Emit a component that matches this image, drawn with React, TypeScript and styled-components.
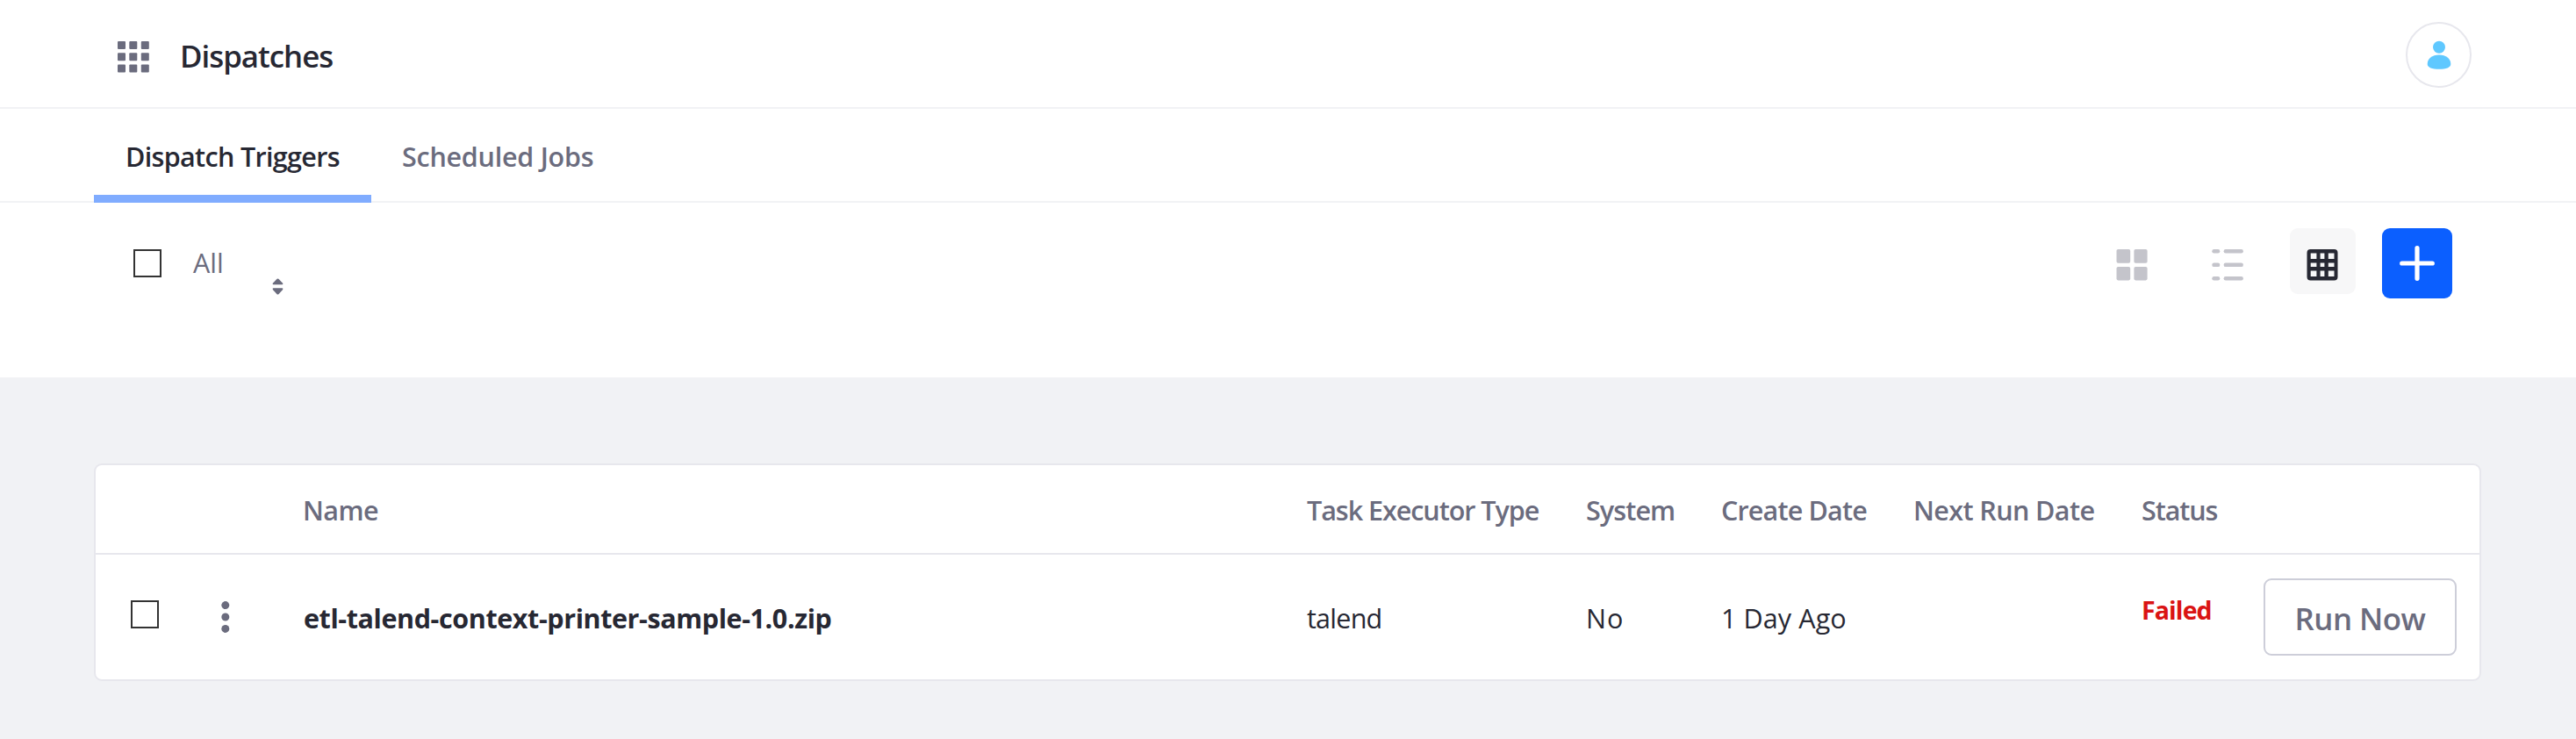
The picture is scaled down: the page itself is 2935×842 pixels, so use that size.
import React from 'react';
import styled, { createGlobalStyle } from 'styled-components';

const GlobalStyle = createGlobalStyle`
  *, *::before, *::after { box-sizing: border-box; }
  body {
    margin: 0;
    background: #f1f2f5;
    color: #272833;
    font-family: 'Open Sans', 'Noto Sans', sans-serif;
    font-size: 30.5px;
    line-height: 44px;
  }
  button, input { font: inherit; margin: 0; }
`;

const Page = styled.div`
  min-height: 842px;
  background: #f1f2f5;
`;

const Header = styled.header`
  display: flex;
  align-items: flex-start;
  height: 124px;
  padding: 25px 119px 0 134px;
  background: #fff;
  border-bottom: 2px solid #f1f2f5;
`;

const AppsIcon = styled.svg`
  width: 36px;
  height: 36px;
  margin-top: 22px;
  fill: #6b6c7e;
`;

const Title = styled.h1`
  flex: 1;
  margin: 14px 0 0 35px;
  font-size: 34.8px;
  font-weight: 600;
  line-height: 50px;
  letter-spacing: -1px;
`;

const Avatar = styled.button`
  display: flex;
  justify-content: center;
  width: 75px;
  height: 75px;
  padding: 0;
  background: #fff;
  border: 2px solid #e7e7ed;
  border-radius: 50%;

  svg {
    width: 28px;
    height: 33px;
    margin-top: 19px;
    fill: #5fc8ff;
  }
`;

const Tabs = styled.nav`
  display: flex;
  height: 107px;
  padding-left: 107px;
  background: #fff;
  border-bottom: 2px solid #f1f2f5;
`;

const Tab = styled.a<{ $active?: boolean; $spacing: number }>`
  height: 107px;
  padding: 32px 35px 0;
  color: ${p => (p.$active ? '#272833' : '#6b6c7e')};
  border-bottom: 9px solid ${p => (p.$active ? '#80acff' : 'transparent')};
  font-weight: 600;
  letter-spacing: ${p => p.$spacing}px;
  white-space: nowrap;
  ${p => p.$active && 'width: 316px; padding-left: 36px;'}
`;

const Toolbar = styled.div`
  display: flex;
  align-items: flex-start;
  height: 199px;
  padding: 29px 141px 0 152px;
  background: #fff;
`;

const Checkbox = styled.input.attrs({ type: 'checkbox' })`
  appearance: none;
  flex: none;
  width: 32px;
  height: 32px;
  background: #fff;
  border: 2px solid #333;
  border-radius: 0;
`;

const SelectAll = styled.label`
  display: flex;
  align-items: center;
  gap: 36px;
  width: 126px;
  height: 80px;
  color: #6b6c7e;

  span {
    padding-bottom: 3px;
  }
`;

const SortButton = styled.button`
  width: 36px;
  height: 36px;
  margin: 50px auto 0 20px;
  padding: 0;
  background: none;
  border: 0;

  svg {
    display: block;
    margin: 0 0 3px 12px;
    fill: #6b6c7e;
  }
`;

const ViewTypes = styled.div`
  display: flex;
  gap: 33.5px;
`;

const ViewButton = styled.button<{ $active?: boolean }>`
  display: flex;
  align-items: center;
  justify-content: center;
  width: 75px;
  height: 75px;
  padding: 0;
  color: ${p => (p.$active ? '#272833' : '#c4c4cb')};
  background: ${p => (p.$active ? '#f7f7f8' : 'transparent')};
  border: 0;
  border-radius: 9px;

  svg {
    width: 36px;
    height: 36px;
    margin: 9px 1px 0 0;
    fill: currentColor;
  }
`;

const AddButton = styled.button`
  display: flex;
  align-items: center;
  justify-content: center;
  width: 80px;
  height: 80px;
  margin-left: 30px;
  padding: 0;
  background: #0b5fff;
  border: 0;
  border-radius: 9px;
`;

const Card = styled.section`
  margin: 98px 108px 0 107px;
  background: #fff;
  border: 2px solid #e7e7ed;
  border-radius: 9px;
`;

const columns = '143px 93px 1144px 318px 154px 219px 260px 139px 220px';

const HeadRow = styled.div`
  display: grid;
  grid-template-columns: ${columns};
  align-items: center;
  height: 102px;
  color: #6b6c7e;
  border-bottom: 2px solid #e7e7ed;
  font-weight: 600;
`;

const Row = styled.div`
  display: grid;
  grid-template-columns: ${columns};
  align-items: center;
  height: 142px;

  ${Checkbox} {
    margin: 0 0 6px 40px;
  }
`;

const Cell = styled.div<{ $spacing?: number }>`
  padding-top: 2px;
  letter-spacing: ${p => p.$spacing ?? 0}px;
  white-space: nowrap;
`;

const NameCell = styled(Cell)`
  padding-left: 1px;
  font-weight: 700;
`;

const MenuButton = styled.button`
  width: 10px;
  height: 40px;
  padding: 0;
  background: none;
  border: 0;

  svg {
    display: block;
    fill: #6b6c7e;
  }
`;

const Status = styled.strong`
  padding-bottom: 17px;
  color: #da1414;
  font-size: 28.5px;
  font-weight: 700;
  letter-spacing: -0.9px;
`;

const RunButton = styled.button`
  height: 88px;
  padding: 3px 0 0;
  color: #6b6c7e;
  background: #fff;
  border: 2px solid #cdced9;
  border-radius: 9px;
  font-size: 34.8px;
  font-weight: 600;
  letter-spacing: -0.5px;
`;

const headings: { label: string; spacing: number }[] = [
  { label: 'Name', spacing: -0.6 },
  { label: 'Task Executor Type', spacing: -1.04 },
  { label: 'System', spacing: -0.9 },
  { label: 'Create Date', spacing: -0.82 },
  { label: 'Next Run Date', spacing: -0.59 },
  { label: 'Status', spacing: -1.1 },
];

export default function App() {
  return (
    <Page>
      <GlobalStyle />
      <Header>
        <AppsIcon viewBox="0 0 36 36">
          {[0, 13.2, 26.5].map(y =>
            [0, 13.3, 26.8].map(x => (
              <rect key={`${x}-${y}`} x={x} y={y} width="9" height="9" rx="1" />
            )),
          )}
        </AppsIcon>
        <Title>Dispatches</Title>
        <Avatar aria-label="User menu">
          <svg viewBox="0 0 28 33">
            <circle cx="14" cy="7.8" r="7" />
            <path d="M14 16.6C22 16.6 27.3 21.3 27.3 27C27.3 31 22 32.8 14 32.8C6 32.8 0.7 31 0.7 27C0.7 21.3 6 16.6 14 16.6Z" />
          </svg>
        </Avatar>
      </Header>

      <Tabs>
        <Tab $active $spacing={-0.66}>Dispatch Triggers</Tab>
        <Tab $spacing={-0.25}>Scheduled Jobs</Tab>
      </Tabs>

      <Toolbar>
        <SelectAll>
          <Checkbox />
          <span>All</span>
        </SelectAll>
        <SortButton aria-label="Sort">
          <svg width="13" height="20" viewBox="0 0 13 20">
            <path d="M6.5 0.4Q7 0.4 7.4 0.8L12.2 5.8Q12.8 7 11.6 7.3H1.4Q0.2 7 0.8 5.8L5.6 0.8Q6 0.4 6.5 0.4Z" />
            <path d="M6.5 18.6Q7 18.6 7.4 18.2L12.2 13Q12.8 11.5 11.6 11.2H1.4Q0.2 11.5 0.8 13L5.6 18.2Q6 18.6 6.5 18.6Z" />
          </svg>
        </SortButton>
        <ViewTypes>
          <ViewButton aria-label="Cards">
            <svg viewBox="0 0 36 36">
              <rect x="0.5" y="0" width="15.7" height="15.7" rx="1.8" />
              <rect x="20.4" y="0" width="15.2" height="15.7" rx="1.8" />
              <rect x="0.5" y="20" width="15.7" height="15.4" rx="1.8" />
              <rect x="20.4" y="20" width="15.2" height="15.4" rx="1.8" />
            </svg>
          </ViewButton>
          <ViewButton aria-label="List">
            <svg viewBox="0 0 36 36">
              {[0, 15.6, 31].map(y => (
                <React.Fragment key={y}>
                  <rect x="0.3" y={y} width="9" height="4.5" rx="2.2" />
                  <rect x="13.6" y={y} width="22.3" height="4.5" rx="2.2" />
                </React.Fragment>
              ))}
            </svg>
          </ViewButton>
          <ViewButton $active aria-label="Table">
            <svg viewBox="0 0 36 36">
              <path
                fillRule="evenodd"
                d="M4.5 0H31.5Q35.5 0 35.5 4V31.4Q35.5 35.4 31.5 35.4H4.5Q0.5 35.4 0.5 31.4V4Q0.5 0 4.5 0Z
                  M4.7 4.4V11H11.4V4.4Z M15.6 4.4V11H20.4V4.4Z M24.8 4.4V11H31.5V4.4Z
                  M4.7 15.5V20H11.4V15.5Z M15.6 15.5V20H20.4V15.5Z M24.8 15.5V20H31.5V15.5Z
                  M4.7 24.4V31H11.4V24.4Z M15.6 24.4V31H20.4V24.4Z M24.8 24.4V31H31.5V24.4Z"
              />
            </svg>
          </ViewButton>
        </ViewTypes>
        <AddButton aria-label="Add">
          <svg width="40" height="40" viewBox="0 0 40 40">
            <path d="M20 2.7V37.3M2.7 20H37.3" stroke="#fff" strokeWidth="5.2" strokeLinecap="round" />
          </svg>
        </AddButton>
      </Toolbar>

      <Card>
        <HeadRow>
          <div />
          <div />
          {headings.map(h => (
            <Cell key={h.label} $spacing={h.spacing}>{h.label}</Cell>
          ))}
        </HeadRow>
        <Row>
          <Checkbox aria-label="Select row" />
          <MenuButton aria-label="Actions">
            <svg width="10" height="40" viewBox="0 0 10 40">
              <circle cx="4.8" cy="6.6" r="4.5" />
              <circle cx="4.8" cy="20" r="4.5" />
              <circle cx="4.8" cy="33.4" r="4.5" />
            </svg>
          </MenuButton>
          <NameCell $spacing={-0.41}>etl-talend-context-printer-sample-1.0.zip</NameCell>
          <Cell $spacing={-0.75}>talend</Cell>
          <Cell $spacing={1}>No</Cell>
          <Cell $spacing={0.1}>1 Day Ago</Cell>
          <div />
          <Status>Failed</Status>
          <RunButton>Run Now</RunButton>
        </Row>
      </Card>
    </Page>
  );
}
